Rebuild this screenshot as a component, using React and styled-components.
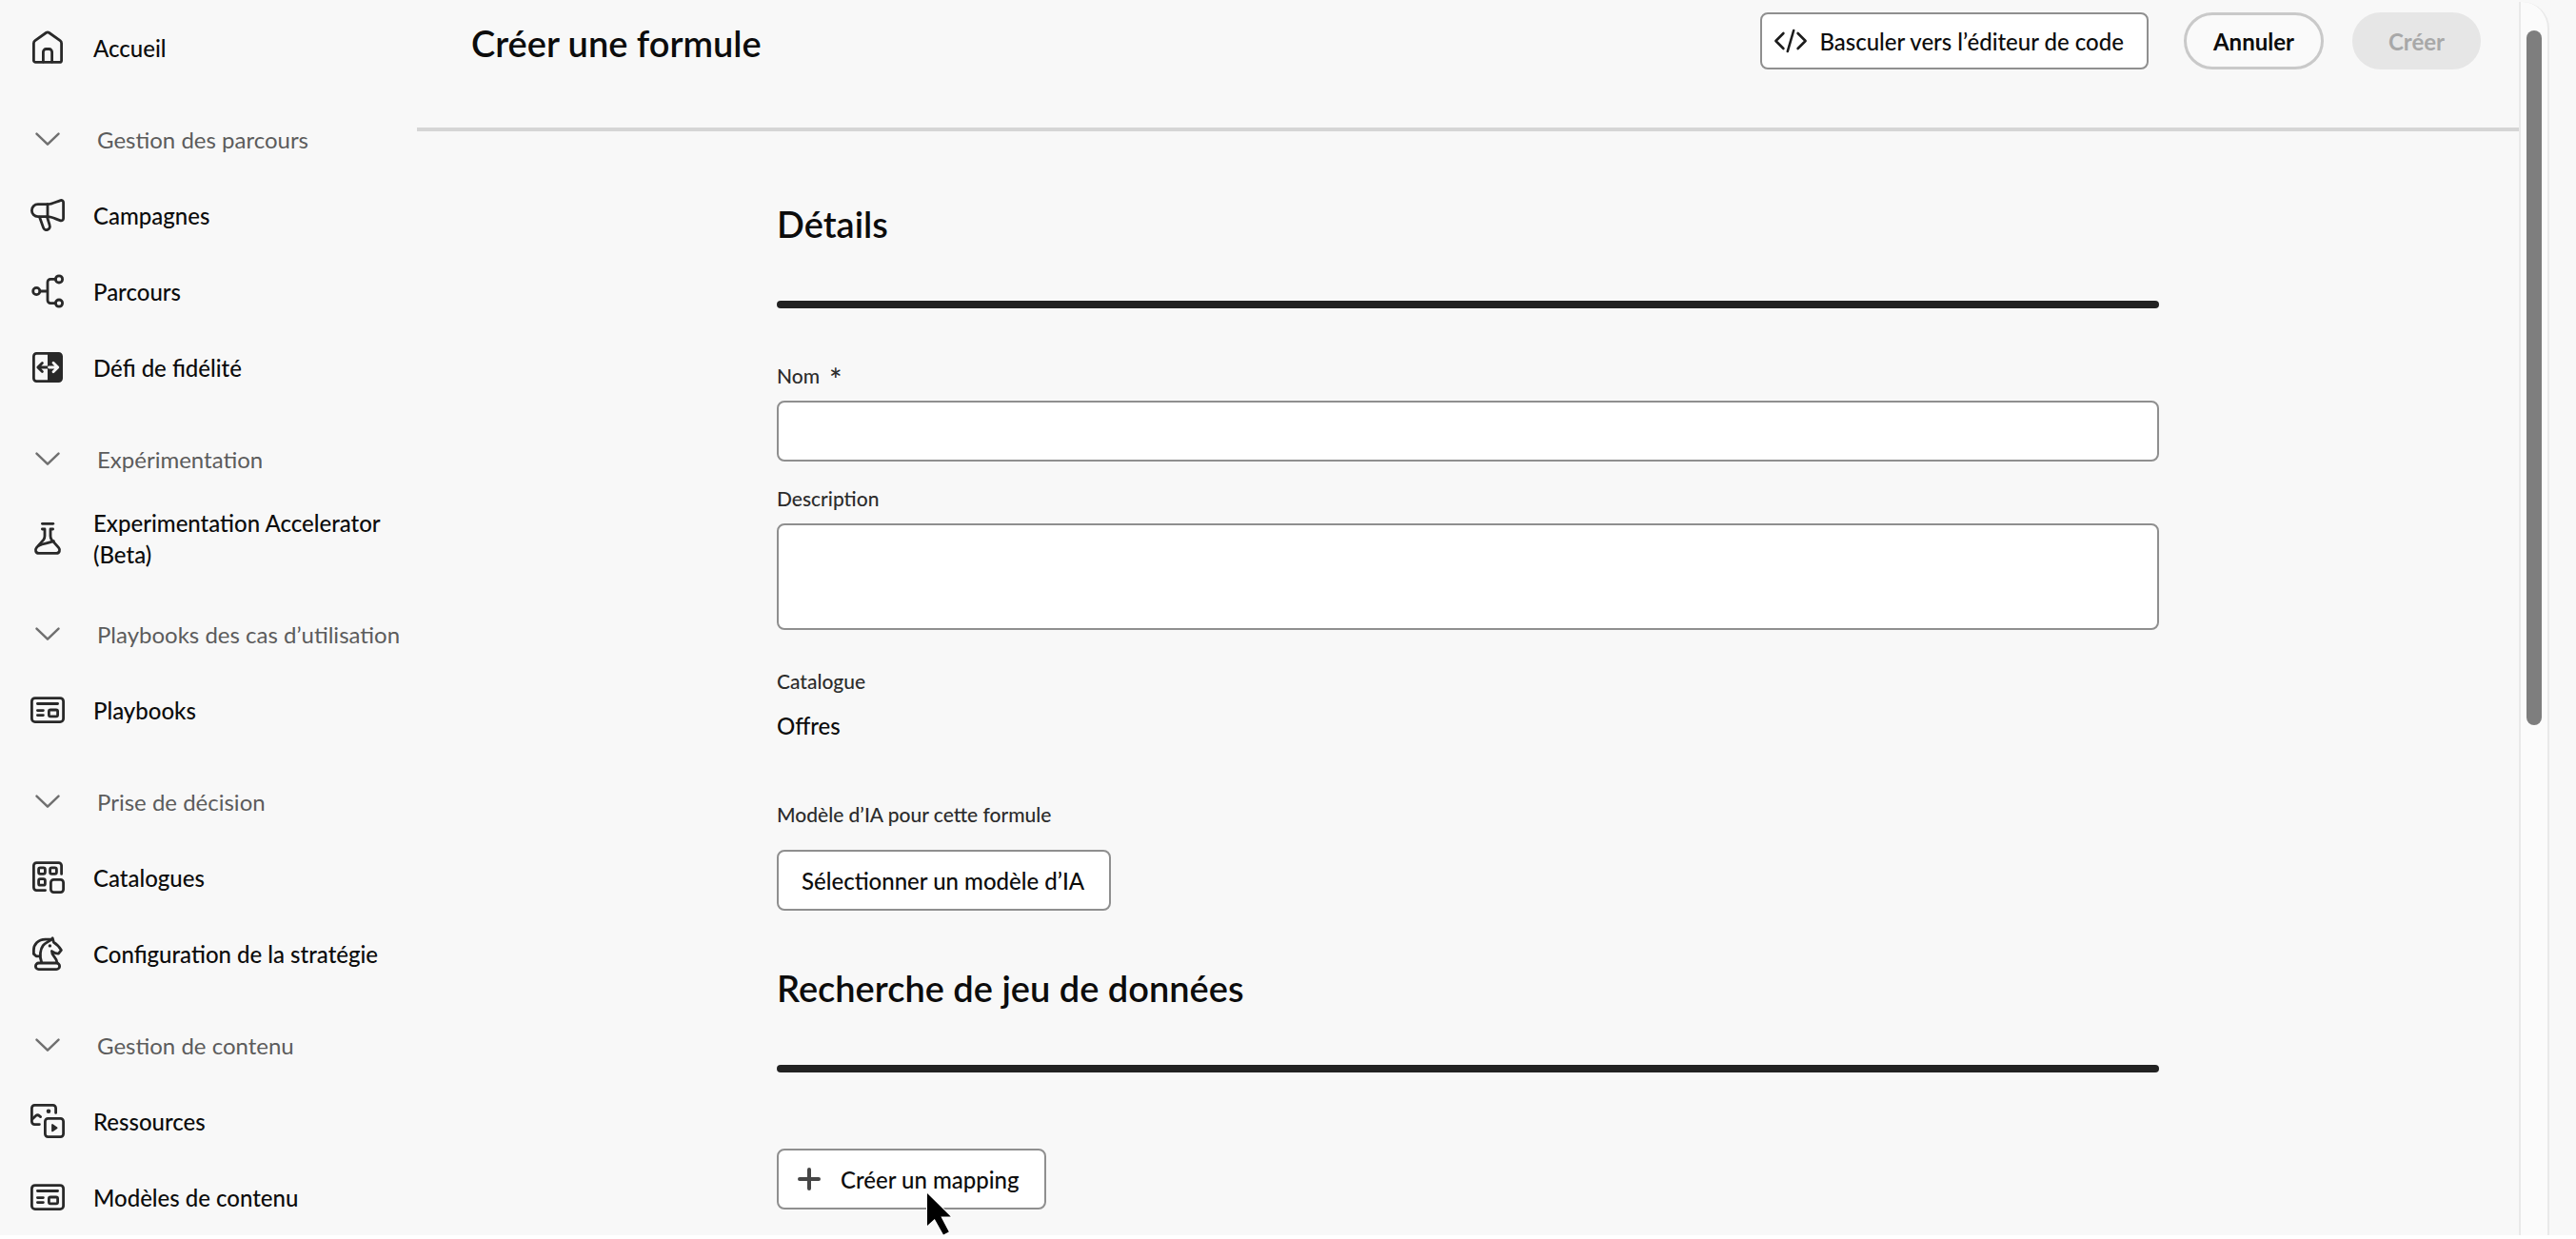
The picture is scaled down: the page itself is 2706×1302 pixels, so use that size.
import React from 'react';
import styled, { createGlobalStyle } from 'styled-components';

const GlobalStyle = createGlobalStyle`
  * { box-sizing: border-box; }
  html, body { margin: 0; background: #ffffff; }
  body, button, input, textarea {
    font-family: Lato, "Open Sans", "Noto Sans", sans-serif;
    font-size: 24px;
    line-height: 33px;
    color: #0c0c0c;
  }
`;

const Shell = styled.div`
  display: flex;
  height: calc(100vh - 4px);
  overflow: hidden;
  background: #f8f8f8;
  padding-right: 28px;
`;

const Sidebar = styled.nav`
  flex: 0 0 438px;
  padding: 10px 0 0 30px;
`;

const NavList = styled.ul`
  list-style: none;
  margin: 0;
  padding: 0;
`;

const NavLink = styled.a`
  display: flex;
  align-items: center;
  gap: 28px;
  min-height: 80px;
  padding: 11px 24px 11px 0;
  color: #0c0c0c;
  font-weight: 500;
  text-decoration: none;
`;

const GroupToggle = styled.button`
  display: flex;
  align-items: center;
  gap: 32px;
  width: 100%;
  height: 80px;
  margin: 16px 0 0;
  padding: 0;
  border: 0;
  background: none;
  color: #5c5c5c;
  text-align: left;
  white-space: nowrap;
  cursor: pointer;
`;

const Glyph = styled.svg`
  flex: none;
  width: 40px;
  height: 40px;
  fill: none;
  stroke: ${(p) => p.$color || '#292929'};
  stroke-width: ${(p) => p.$weight || 2.8};
  stroke-linecap: round;
  stroke-linejoin: round;
`;

const Main = styled.main`
  flex: 1;
  min-width: 0;
`;

const TopBar = styled.header`
  display: flex;
  align-items: flex-start;
  justify-content: space-between;
  height: 138px;
  padding: 13px 40px 0 57px;
  border-bottom: 4px solid #d5d5d5;
`;

const Title = styled.h1`
  margin: 10px 0 0;
  font-size: 38px;
  line-height: 44px;
  font-weight: 600;
`;

const Actions = styled.div`
  display: flex;
  gap: 30px;
`;

const BoxButton = styled.button`
  position: relative;
  display: inline-flex;
  align-items: center;
  gap: ${(p) => p.$gap || 0}px;
  height: 64px;
  padding: 0 26px 0 ${(p) => (p.$gap ? 12 : 24)}px;
  border: 2px solid #8f8f8f;
  border-radius: 8px;
  background: #ffffff;
  font-weight: 500;
  white-space: nowrap;
  cursor: pointer;
`;

const CodeButton = styled(BoxButton)`
  height: 60px;
  padding: 0 24px 0 10px;
  margin-right: 7px;
`;

const PillButton = styled.button`
  height: 60px;
  padding: 0 ${(p) => (p.disabled ? 35 : 28)}px;
  border: 3px solid ${(p) => (p.disabled ? '#e6e6e6' : '#c9c9c9')};
  border-radius: 30px;
  background: ${(p) => (p.disabled ? '#e6e6e6' : '#fafafa')};
  color: ${(p) => (p.disabled ? '#a8a8a8' : '#0c0c0c')};
  font-weight: 700;
`;

const Form = styled.form`
  max-width: 1452px;
  margin: 0 auto;
  padding-top: 75px;
`;

const SectionTitle = styled.h2`
  margin: 0;
  font-size: 38px;
  line-height: 44px;
  font-weight: 600;
`;

const Rule = styled.hr`
  height: 8px;
  margin: 59px 0 0;
  border: 0;
  border-radius: 4px;
  background: #222222;
`;

const Field = styled.div`
  display: flex;
  flex-direction: column;
  align-items: ${(p) => (p.$fit ? 'flex-start' : 'stretch')};
  gap: ${(p) => p.$gap || 12}px;
  margin-top: ${(p) => p.$top}px;
`;

const Label = styled.label`
  font-size: 21px;
  line-height: 28px;
  font-weight: 500;
  color: #2c2c2c;
`;

const Star = styled.span`
  margin-left: 10px;
  font-size: 32px;
  line-height: 20px;
  vertical-align: -8px;
`;

const TextInput = styled.input`
  height: 64px;
  padding: 0 16px;
  border: 2px solid #8f8f8f;
  border-radius: 8px;
  background: #ffffff;
`;

const TextArea = styled.textarea`
  display: block;
  height: 112px;
  padding: 12px 16px;
  border: 2px solid #8f8f8f;
  border-radius: 8px;
  background: #ffffff;
  resize: none;
`;

const Value = styled.output`
  font-weight: 500;
`;

const Section = styled.section`
  margin-top: ${(p) => p.$top || 0}px;
`;

const MappingRow = styled.div`
  display: flex;
  margin-top: 80px;
`;

const Pointer = styled.svg`
  position: absolute;
  left: 152px;
  top: 41px;
  width: 30px;
  height: 48px;
`;

const ScrollTrack = styled.div`
  flex: 0 0 30px;
  margin-top: 2px;
  padding: 30px 6px 0;
  border: solid #e9e9e9;
  border-width: 0 2px;
  border-top-right-radius: 28px;
  background: #fbfbfb;
`;

const ScrollThumb = styled.div`
  width: 16px;
  height: calc(58% - 4px);
  border-radius: 8px;
  background: #7e7e7e;
`;

const icons = {
  home: (
    <>
      <path d="M5.4 33.4V15.6c0-1.2.5-2.2 1.5-2.9L18.3 4.5a3 3 0 0 1 3.4 0l11.4 8.2c1 .7 1.5 1.7 1.5 2.9v17.8a2 2 0 0 1-2 2H7.4a2 2 0 0 1-2-2z" />
      <path d="M15.4 35V24.5a3 3 0 0 1 3-3h3.2a3 3 0 0 1 3 3V35" />
    </>
  ),
  megaphone: (
    <>
      <path d="M20 8.7H9.9a6.5 6.5 0 0 0 0 13H20z" />
      <path d="M20 8.7C24.5 8.7 29 6 33.6 4.6a2.3 2.3 0 0 1 3 2.2V23.6a2.3 2.3 0 0 1-3 2.2C29 24.4 24.5 21.7 20 21.7" />
      <path d="M11.6 22.2l3.9 10.9a3.5 3.5 0 0 0 6.7-2.2L19.5 22" />
    </>
  ),
  journey: (
    <>
      <circle cx="8.3" cy="20" r="3.6" />
      <circle cx="32" cy="7.4" r="3.6" />
      <circle cx="32" cy="32.6" r="3.6" />
      <path d="M12 20H19.5M28.2 7.4H23a3 3 0 0 0-3 3V29.6a3 3 0 0 0 3 3H28.2" />
    </>
  ),
  loyalty: (
    <>
      <rect x="5.4" y="5.4" width="29.2" height="29.2" rx="3" />
      <path d="M20 5.4H31.6a3 3 0 0 1 3 3V31.6a3 3 0 0 1-3 3H20z" fill="#292929" stroke="none" />
      <path d="M20 20H10.4M14.4 15.4L9.8 20l4.6 4.6" />
      <path d="M21.5 20H30M26 15.2L30.8 20 26 24.8" stroke="#f8f8f8" />
    </>
  ),
  flask: (
    <>
      <path d="M14.4 4.3H25.8" />
      <path d="M14.4 10H17v7.2c0 1.5-.5 2.9-1.4 4.1L8.3 29.6c-2 2.4-.6 5.8 2.4 5.8h18.6c3 0 4.4-3.4 2.4-5.8L24.4 21.3c-.9-1.2-1.4-2.6-1.4-4.1V10h2.6" />
      <path d="M11 27.2C16 24.8 21.5 25 26.4 22.6" />
    </>
  ),
  layout: (
    <>
      <rect x="3.4" y="7.6" width="33.2" height="25" rx="3.4" />
      <path d="M9.4 13.5H30.6M9.4 20.6H15.4M9.4 25.6H15.4" />
      <rect x="21.4" y="20" width="9.2" height="6.8" rx="1.6" />
    </>
  ),
  catalog: (
    <>
      <path d="M34.6 16.4V7.6a3 3 0 0 0-3-3H8.4a3 3 0 0 0-3 3V30.6a3 3 0 0 0 3 3H17.6" />
      <rect x="10.6" y="9.8" width="6.8" height="6.6" rx="1.8" />
      <rect x="22.6" y="9.8" width="6.8" height="6.6" rx="1.8" />
      <rect x="10.6" y="21.6" width="6.8" height="6.6" rx="1.8" />
      <rect x="23.4" y="22.4" width="13.2" height="13.2" rx="3" />
    </>
  ),
  knight: (
    <>
      <rect x="7.4" y="30" width="25.2" height="6.6" rx="3.3" />
      <path d="M13.6 29C11.2 22.5 12.4 15.4 15.2 11.6C18 8 22.4 7.6 25.2 3.8L26.4 8.2C29.6 10 32.2 13 34.4 16.4L31.4 20.2C28.8 20.4 26.8 19.2 24.4 17.6C24.2 22.4 29.4 24 29.8 29" />
      <path d="M22.4 5.2H17.6C10 5.2 5.4 10.4 5.4 16.6V20.4L8 22.8H11.8" />
      <circle cx="22.4" cy="11.9" r="1.7" fill="#292929" stroke="none" />
    </>
  ),
  assets: (
    <>
      <path d="M28.6 11.4V6.4a3 3 0 0 0-3-3H6.4a3 3 0 0 0-3 3V20.6a3 3 0 0 0 3 3H11.4" />
      <path d="M4 18L7.6 14.6a2.8 2.8 0 0 1 3.8 0L12.6 15.6" />
      <circle cx="21" cy="9.8" r="2.3" fill="#292929" stroke="none" />
      <rect x="17.4" y="17.4" width="19.2" height="19.2" rx="3" />
      <path d="M25 24V30.4L29.6 27.2z" fill="#292929" strokeWidth="1.8" />
    </>
  ),
};

const groups = [
  {
    title: 'Gestion des parcours',
    items: [
      { icon: 'megaphone', label: 'Campagnes' },
      { icon: 'journey', label: 'Parcours' },
      { icon: 'loyalty', label: 'Défi de fidélité' },
    ],
  },
  {
    title: 'Expérimentation',
    items: [{ icon: 'flask', label: 'Experimentation Accelerator (Beta)' }],
  },
  {
    title: 'Playbooks des cas d’utilisation',
    items: [{ icon: 'layout', label: 'Playbooks' }],
  },
  {
    title: 'Prise de décision',
    items: [
      { icon: 'catalog', label: 'Catalogues' },
      { icon: 'knight', label: 'Configuration de la stratégie' },
    ],
  },
  {
    title: 'Gestion de contenu',
    items: [
      { icon: 'assets', label: 'Ressources' },
      { icon: 'layout', label: 'Modèles de contenu' },
    ],
  },
];

function NavItem({ icon, label }) {
  return (
    <li>
      <NavLink href="#">
        <Glyph viewBox="0 0 40 40" aria-hidden="true">{icons[icon]}</Glyph>
        <span>{label}</span>
      </NavLink>
    </li>
  );
}

function NavGroup({ title, items }) {
  return (
    <li>
      <GroupToggle type="button" aria-expanded="true">
        <Glyph viewBox="0 0 40 40" $color="#707070" $weight={2.5} aria-hidden="true">
          <path d="M8.5 14.6L20 25.6L31.5 14.6" />
        </Glyph>
        <span>{title}</span>
      </GroupToggle>
      <NavList>
        {items.map((item) => (
          <NavItem key={item.label} {...item} />
        ))}
      </NavList>
    </li>
  );
}

export default function App() {
  return (
    <>
      <GlobalStyle />
      <Shell>
        <Sidebar>
          <NavList>
            <NavItem icon="home" label="Accueil" />
            {groups.map((group) => (
              <NavGroup key={group.title} {...group} />
            ))}
          </NavList>
        </Sidebar>
        <Main>
          <TopBar>
            <Title>Créer une formule</Title>
            <Actions>
              <CodeButton type="button" $gap={10}>
                <Glyph viewBox="0 0 40 40" $color="#1c1c1c" $weight={2.6} aria-hidden="true">
                  <path d="M12.4 12L4.4 20L12.4 28M27.6 12L35.6 20L27.6 28M23.2 9L16.8 31" />
                </Glyph>
                Basculer vers l’éditeur de code
              </CodeButton>
              <PillButton type="button">Annuler</PillButton>
              <PillButton type="button" disabled>Créer</PillButton>
            </Actions>
          </TopBar>
          <Form>
            <Section>
              <SectionTitle>Détails</SectionTitle>
              <Rule />
              <Field $top={57}>
                <Label htmlFor="name">
                  Nom<Star>*</Star>
                </Label>
                <TextInput id="name" type="text" required />
              </Field>
              <Field $top={25}>
                <Label htmlFor="description">Description</Label>
                <TextArea id="description" />
              </Field>
              <Field $top={40} $gap={16}>
                <Label htmlFor="catalog">Catalogue</Label>
                <Value id="catalog">Offres</Value>
              </Field>
              <Field $top={63} $gap={23} $fit>
                <Label htmlFor="model">Modèle d’IA pour cette formule</Label>
                <BoxButton id="model" type="button">Sélectionner un modèle d’IA</BoxButton>
              </Field>
            </Section>
            <Section $top={59}>
              <SectionTitle>Recherche de jeu de données</SectionTitle>
              <Rule />
              <MappingRow>
                <BoxButton type="button" $gap={13}>
                  <Glyph viewBox="0 0 40 40" $color="#464646" $weight={4} aria-hidden="true">
                    <path d="M10 20H30M20 10V30" />
                  </Glyph>
                  Créer un mapping
                  <Pointer viewBox="-4 -4 30 48" aria-hidden="true">
                    <path
                      d="M0 0V34L7.8 27L17 43.4L22.8 40.6L14.4 24.4H24.8z"
                      fill="#000000"
                      stroke="#ffffff"
                      strokeWidth="2"
                      paintOrder="stroke"
                    />
                  </Pointer>
                </BoxButton>
              </MappingRow>
            </Section>
          </Form>
        </Main>
        <ScrollTrack>
          <ScrollThumb />
        </ScrollTrack>
      </Shell>
    </>
  );
}
